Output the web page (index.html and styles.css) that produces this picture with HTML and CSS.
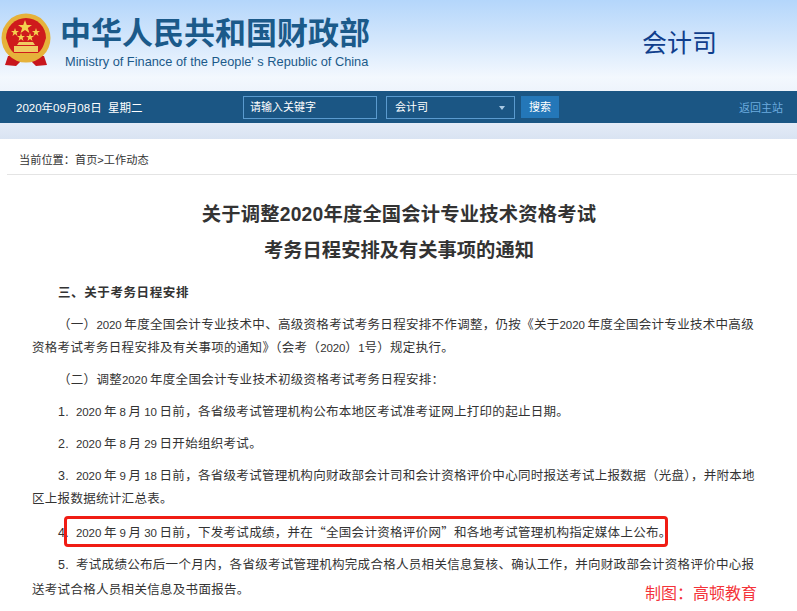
FILE: index.html
```html
<!DOCTYPE html>
<html lang="zh-CN">

<head>
    <meta charset="UTF-8">
    <link rel="stylesheet" href="styles.css">
</head>

<body>
    <div class="banner">
        <svg class="emblem" width="52" height="54" viewBox="0 0 52 54">
            <path d="M8 43 L5 52 L16 53 L22 47 H30 L36 53 L47 52 L44 43 Z" fill="#c8161d"/>
            <circle cx="26" cy="25" r="24.5" fill="#e6b23a"/>
            <path d="M6 25 A20 20 0 0 1 46 25 L44 31 Q42 37 38 40 H14 Q10 37 8 31 Z" fill="#cf1a1c"/>
            <polygon points="25,7 26.8,12 32,12 27.8,15 29.4,20 25,17 20.6,20 22.2,15 18,12 23.2,12" fill="#f4d04e"/>
            <polygon points="15,15 16,18 19,18 16.6,19.8 17.5,23 15,21 12.5,23 13.4,19.8 11,18 14,18" fill="#f4d04e"/>
            <polygon points="21,20 22,23 25,23 22.6,24.8 23.5,28 21,26 18.5,28 19.4,24.8 17,23 20,23" fill="#f4d04e"/>
            <polygon points="30,20 31,23 34,23 31.6,24.8 32.5,28 30,26 27.5,28 28.4,24.8 26,23 29,23" fill="#f4d04e"/>
            <polygon points="36,15 37,18 40,18 37.6,19.8 38.5,23 36,21 33.5,23 34.4,19.8 32,18 35,18" fill="#f4d04e"/>
            <path d="M19 29 H33 L35 32 H17 Z M14 33 H38 V39 H14 Z" fill="#f0cb62"/>
            <rect x="9" y="40" width="34" height="3" fill="#e6b23a"/>
            <rect x="17" y="43" width="18" height="5" fill="#e6b23a"/>
        </svg>
        <div class="brand">
            <div class="brand-cn">中华人民共和国财政部</div>
            <div class="brand-en">Ministry of Finance of the People' s Republic of China</div>
        </div>
        <div class="dept">会计司</div>
    </div>

    <div class="navbar">
        <span class="nav-date">2020年09月08日&nbsp;&nbsp;星期二</span>
        <div class="nav-input">请输入关键字</div>
        <div class="nav-select">会计司<span class="nav-arrow"></span></div>
        <div class="nav-btn">搜索</div>
        <a class="nav-home">返回主站</a>
    </div>
    <div class="strip"></div>

    <div class="crumb">当前位置&#xFF1A;首页&gt;工作动态</div>

    <div class="article">
        <h1>关于调整2020年度全国会计专业技术资格考试</h1>
        <h1>考务日程安排及有关事项的通知</h1>

        <p class="first"><b>三、关于考务日程安排</b></p>
        <p>&#xFF08;一&#xFF09;<span class="n">2020</span> 年度全国会计专业技术中、高级资格考试考务日程安排不作调整&#xFF0C;仍按《关于<span class="n">2020</span> 年度全国会计专业技术中高级<br>资格考试考务日程安排及有关事项的通知》&#xFF08;会考&#xFF08;<span class="n">2020</span>&#xFF09;<span class="n">1</span>号&#xFF09;规定执行。</p>
        <p>&#xFF08;二&#xFF09;调整<span class="n">2020</span> 年度全国会计专业技术初级资格考试考务日程安排&#xFF1A;</p>
        <p><span class="num">1.</span><span class="n">2020</span> 年 <span class="n">8</span> 月 <span class="n">10</span> 日前&#xFF0C;各省级考试管理机构公布本地区考试准考证网上打印的起止日期。</p>
        <p><span class="num">2.</span><span class="n">2020</span> 年 <span class="n">8</span> 月 <span class="n">29</span> 日开始组织考试。</p>
        <p><span class="num">3.</span><span class="n">2020</span> 年 <span class="n">9</span> 月 <span class="n">18</span> 日前&#xFF0C;各省级考试管理机构向财政部会计司和会计资格评价中心同时报送考试上报数据&#xFF08;光盘&#xFF09;&#xFF0C;并附本地<br>区上报数据统计汇总表。</p>
        <p><span class="num">4.</span><span class="n">2020</span> 年 <span class="n">9</span> 月 <span class="n">30</span> 日前&#xFF0C;下发考试成绩&#xFF0C;并在<span class="cjk">&#x201C;</span>全国会计资格评价网<span class="cjk">&#x201D;</span>和各地考试管理机构指定媒体上公布。<span class="redbox"></span></p>
        <p class="last"><span class="num">5.</span>考试成绩公布后一个月内&#xFF0C;各省级考试管理机构完成合格人员相关信息复核、确认工作&#xFF0C;并向财政部会计资格评价中心报<br>送考试合格人员相关信息及书面报告。</p>
    </div>

    <div class="credit">制图&#xFF1A;高顿教育</div>
</body>

</html>
```

FILE: styles.css
```css
/* Page */
html, body {
    height: 611px;
    overflow: hidden;
}

body {
    margin: 0;
    position: relative;
    background: #fff;
    color: #333;
    font-family: "Liberation Sans", "Noto Sans CJK SC", sans-serif;
}

/* Top banner */
.banner {
    height: 91px;
    display: flex;
    align-items: flex-start;
    background: linear-gradient(#b4d6fb, #d4e7fc 45%, #f3f8fe 85%, #eef4fc);
}

.emblem {
    margin: 13px 0 0 0;
    flex: none;
}

.brand {
    margin: 14px 0 0 8px;
    color: #1b5a8a;
}

.brand-cn {
    font-size: 31px;
    line-height: 40px;
    font-weight: bold;
    white-space: nowrap;
}

.brand-en {
    font-size: 12.8px;
    line-height: 16px;
    margin: 0 0 0 5px;
    white-space: nowrap;
}

.dept {
    margin: 25px 0 0 272px;
    font-size: 25px;
    line-height: 36px;
    color: #0f3e8c;
}

/* Nav bar */
.navbar {
    height: 32px;
    display: flex;
    align-items: center;
    background: #1b5684;
    color: #fff;
    font-size: 11px;
}

.nav-date {
    width: 243px;
    padding-left: 16px;
    box-sizing: border-box;
    font-size: 11.5px;
}

.nav-input, .nav-select {
    height: 23px;
    line-height: 21px;
    border: 1px solid #5b9bcf;
    box-sizing: border-box;
}

.nav-input {
    width: 134px;
    padding-left: 6px;
}

.nav-select {
    width: 129px;
    margin-left: 9px;
    padding-left: 8px;
    position: relative;
}

.nav-arrow {
    position: absolute;
    right: 9px;
    top: 9px;
    border: 3px solid transparent;
    border-top: 4px solid #a9c9e4;
    border-bottom: 0;
}

.nav-btn {
    width: 38px;
    height: 22px;
    line-height: 22px;
    margin-left: 6px;
    text-align: center;
    background: #2477b8;
}

.nav-home {
    margin-left: 180px;
    color: #6cabdf;
}

/* Band under the nav */
.strip {
    height: 16px;
    background: linear-gradient(#e4ebf7, #d9e3f2);
}

/* Breadcrumb */
.crumb {
    margin: 0 0 0 7px;
    padding: 0 0 0 12px;
    height: 35px;
    line-height: 42px;
    font-size: 11.2px;
    border-bottom: 1px solid #e4e4e4;
}

/* Article */
.article {
    padding: 0 31px 0 32px;
    font-size: 12.5px;
    letter-spacing: 0.3px;
    word-spacing: -1px;
    white-space: nowrap;
}

.article h1 {
    margin: 0;
    text-align: center;
    font-size: 19.3px;
    line-height: 36px;
    letter-spacing: 0;
    color: #333;
}

.article h1:first-child {
    margin-top: 22px;
    letter-spacing: 0.2px;
}

.article p {
    margin: 9px 0 0 0;
    line-height: 23px;
    text-indent: 26px;
    position: relative;
}

.article p.first {
    margin-top: 13px;
    letter-spacing: 0.6px;
}

.article p.last {
    line-height: 25px;
    margin-top: 8px;
}

.num {
    display: inline-block;
    width: 18px;
    text-indent: 0;
}

/* Numbers run narrower than the Chinese text */
.n {
    font-size: 11.5px;
    letter-spacing: -0.1px;
}

.cjk {
    font-family: "Noto Sans CJK SC", sans-serif;
}

/* Red highlight over point 4 */
.redbox {
    position: absolute;
    left: 32px;
    top: -4px;
    width: 598px;
    height: 25px;
    border: 3px solid #f01c14;
    border-radius: 4px;
}

/* Credit in the corner */
.credit {
    position: absolute;
    left: 645px;
    top: 583px;
    font-size: 16px;
    line-height: 22px;
    color: #f4333a;
}
```
